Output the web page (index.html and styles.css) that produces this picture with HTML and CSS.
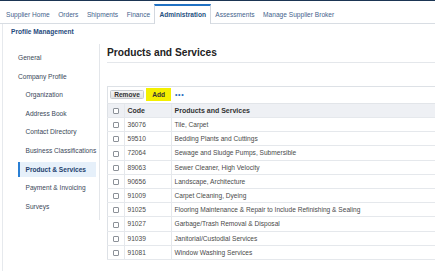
FILE: index.html
```html
<!DOCTYPE html>
<html lang="en">

<head>
    <meta charset="UTF-8">
    <meta name="viewport" content="width=device-width, initial-scale=1.0">
    <title>Products and Services</title>

    <link rel="stylesheet" href="styles.css">
</head>

<body>

    <div class="topline"></div>

    <nav class="tabs">
        <a class="tab">Supplier Home</a>
        <a class="tab">Orders</a>
        <a class="tab">Shipments</a>
        <a class="tab">Finance</a>
        <a class="tab active">Administration</a>
        <a class="tab">Assessments</a>
        <a class="tab">Manage Supplier Broker</a>
    </nav>

    <div class="panel">
        <div class="crumb">Profile Management</div>

        <div class="layout">
            <aside class="sidebar">
                <ul class="nav">
                    <li>General</li>
                    <li>Company Profile</li>
                    <li class="sub">Organization</li>
                    <li class="sub">Address Book</li>
                    <li class="sub">Contact Directory</li>
                    <li class="sub">Business Classifications</li>
                    <li class="sub selected">Product &amp; Services</li>
                    <li class="sub">Payment &amp; Invoicing</li>
                    <li class="sub">Surveys</li>
                </ul>
            </aside>

            <main class="main">
                <h1>Products and Services</h1>

                <div class="toolbar">
                    <button class="btn">Remove</button>
                    <button class="btn add">Add</button>
                    <span class="more">&bull;&bull;&bull;</span>
                </div>

                <table class="grid">
                    <colgroup>
                        <col class="c-check">
                        <col class="c-code">
                        <col>
                    </colgroup>
                    <thead>
                        <tr>
                            <th class="check"><span class="cb"></span></th>
                            <th>Code</th>
                            <th>Products and Services</th>
                        </tr>
                    </thead>
                    <tbody>
                        <tr><td class="check"><span class="cb"></span></td><td>36076</td><td>Tile, Carpet</td></tr>
                        <tr><td class="check"><span class="cb"></span></td><td>59510</td><td>Bedding Plants and Cuttings</td></tr>
                        <tr><td class="check"><span class="cb"></span></td><td>72064</td><td>Sewage and Sludge Pumps, Submersible</td></tr>
                        <tr><td class="check"><span class="cb"></span></td><td>89063</td><td>Sewer Cleaner, High Velocity</td></tr>
                        <tr><td class="check"><span class="cb"></span></td><td>90656</td><td>Landscape, Architecture</td></tr>
                        <tr><td class="check"><span class="cb"></span></td><td>91009</td><td>Carpet Cleaning, Dyeing</td></tr>
                        <tr><td class="check"><span class="cb"></span></td><td>91025</td><td>Flooring Maintenance &amp; Repair to Include Refinishing &amp; Sealing</td></tr>
                        <tr><td class="check"><span class="cb"></span></td><td>91027</td><td>Garbage/Trash Removal &amp; Disposal</td></tr>
                        <tr><td class="check"><span class="cb"></span></td><td>91039</td><td>Janitorial/Custodial Services</td></tr>
                        <tr><td class="check"><span class="cb"></span></td><td>91081</td><td>Window Washing Services</td></tr>
                    </tbody>
                </table>
            </main>
        </div>
    </div>

</body>

</html>
```

FILE: styles.css
```css
html,
body {
    margin: 0;
    overflow: hidden;
}

body {
    font-family: "Liberation Sans", Arial, sans-serif;
    font-size: 6.6px;
    color: #3a4859;
    background: #fff;
}

.topline {
    height: 1px;
    background: #1b3554;
}

/* tab bar */
.tabs {
    display: flex;
    align-items: flex-end;
    height: 22px;
    padding-left: 1.7px;
    border-bottom: 1px solid #d8dde3;
}

.tab {
    line-height: 16px;
    padding: 0 4.3px;
    color: #44638c;
    white-space: nowrap;
}

.tab.active {
    line-height: 18px;
    padding: 0 4px;
    margin-bottom: -1px;
    font-weight: bold;
    color: #25517f;
    background: #fff;
    border-top: 2px solid #2172c4;
    border-left: 1px solid #d3d8df;
    border-right: 1px solid #d3d8df;
}

/* page body */
.panel {
    margin-left: 2px;
    border-left: 1px solid #e6e9ed;
    min-height: 260px;
}

.crumb {
    line-height: 16px;
    padding-left: 8px;
    font-weight: bold;
    color: #1f4a7c;
}

.layout {
    display: grid;
    grid-template-columns: 97px 1fr;
    column-gap: 7px;
}

.sidebar {
    box-sizing: border-box;
    margin-top: 4px;
    height: 176px;
    padding: 6px 0 5px;
    border-right: 1px solid #e3e6ea;
}

.nav {
    list-style: none;
    margin: 0;
    padding: 0;
    display: flex;
    flex-direction: column;
    gap: 3.1px;
}

.nav li {
    line-height: 15.5px;
    margin: 0 3px 0 15px;
    white-space: nowrap;
}

.nav li.sub {
    padding-left: 5.5px;
    border-left: 2px solid transparent;
}

.nav li.selected {
    background: #e6f0fa;
    border-left-color: #2a7fd4;
    font-weight: bold;
    color: #1e3f6e;
}

/* main area */
.main {
    min-width: 0;
}

h1 {
    margin: 7px 0 0;
    padding-bottom: 3px;
    font-size: 10.2px;
    line-height: 12px;
    color: #222;
    border-bottom: 1px solid #e4e7eb;
}

.toolbar {
    box-sizing: border-box;
    display: flex;
    align-items: center;
    height: 17px;
    margin-top: 23px;
    padding: 0 0 1px 2px;
    border-top: 1px solid #dde1e6;
    border-left: 1px solid #dde1e6;
}

.btn {
    font-family: inherit;
    font-size: 6.6px;
    font-weight: bold;
    color: #333;
    height: 9.5px;
    line-height: 7px;
    padding: 0 3.2px;
    border: 1px solid #c5c9ce;
    border-radius: 1.5px;
    background: linear-gradient(#f5f5f5, #e2e2e2);
}

.btn.add {
    height: 13.4px;
    margin-left: 2px;
    padding: 0 6.1px;
    border: none;
    border-radius: 0;
    background: #f3ef00;
}

.more {
    margin-left: 4px;
    font-size: 7px;
    font-weight: bold;
    letter-spacing: 0.6px;
    color: #2a6cc0;
}

/* table */
.grid {
    width: 100%;
    table-layout: fixed;
    border-collapse: collapse;
    border-left: 1px solid #dde1e6;
    border-bottom: 1px solid #dde1e6;
}

.c-check {
    width: 17px;
}

.c-code {
    width: 47px;
}

.grid th,
.grid td {
    padding: 0 0 0 2.5px;
    text-align: left;
    white-space: nowrap;
    overflow: hidden;
    border-bottom: 1px solid #e5e8ec;
    border-left: 1px solid #e5e8ec;
}

.grid th {
    height: 13px;
    font-size: 7px;
    font-weight: bold;
    color: #333;
    background: #eef0f4;
    border-top: 1px solid #e2e5e9;
}

.grid td {
    height: 13.2px;
    color: #4a4a4a;
}

.grid .check {
    padding: 0;
    text-align: center;
    border-left: none;
}

.cb {
    display: inline-block;
    box-sizing: border-box;
    width: 6px;
    height: 6px;
    vertical-align: middle;
    border: 1px solid #8c9198;
    border-radius: 1px;
    background: #fff;
}
```
